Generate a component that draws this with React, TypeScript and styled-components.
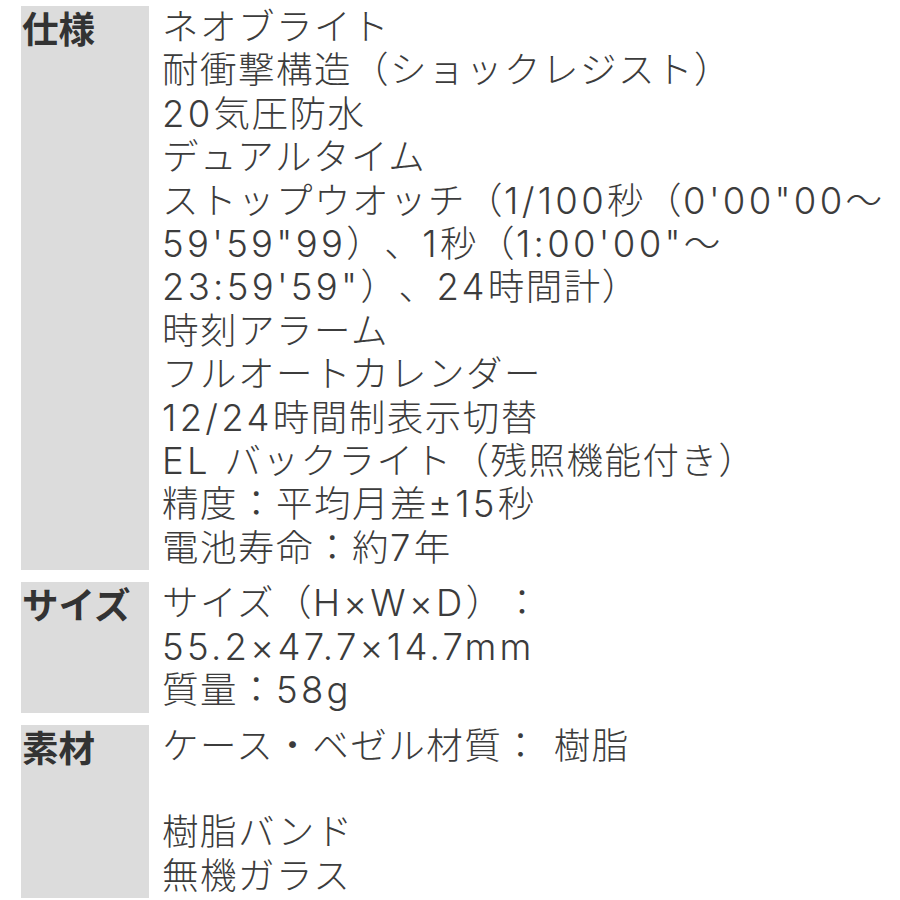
import React from "react";
import styled, { createGlobalStyle } from "styled-components";

const Global = createGlobalStyle`
  html, body { margin: 0; padding: 0; background: #ffffff; }
  body { font-family: "Noto Sans CJK JP", sans-serif; color: #333333; }
`;

const Table = styled.div`
  display: grid;
  grid-template-columns: 128px 1fr;
  column-gap: 13px;
  row-gap: 12px;
  padding: 6px 0 0 21px;
  font-size: 36.5px;
  line-height: 43.4px;
  text-spacing-trim: space-all;
`;

const Label = styled.div`
  background: #dcdcdc;
  font-weight: 700;
  padding-left: 1px;
  color: #333333;
  white-space: nowrap;
`;

const Value = styled.div`
  font-family: "Inter", "Noto Sans CJK JP", sans-serif;
  font-weight: 300;
  color: #3c3c3c;
  letter-spacing: 1.5px;
`;

const Line = styled.div`
  white-space: nowrap;
  min-height: 43.4px;
`;

const Latin = styled.span`
  letter-spacing: 3.3px;
`;

type Row = { label: string; lines: string[] };

const rows: Row[] = [
  {
    label: "仕様",
    lines: [
      "ネオブライト",
      "耐衝撃構造（ショックレジスト）",
      "20気圧防水",
      "デュアルタイム",
      "ストップウオッチ（1/100秒（0'00\"00～",
      "59'59\"99）、1秒（1:00'00\"～",
      "23:59'59\"）、24時間計）",
      "時刻アラーム",
      "フルオートカレンダー",
      "12/24時間制表示切替",
      "EL バックライト（残照機能付き）",
      "精度：平均月差±15秒",
      "電池寿命：約7年",
    ],
  },
  {
    label: "サイズ",
    lines: ["サイズ（H×W×D）：", "55.2×47.7×14.7mm", "質量：58g"],
  },
  {
    label: "素材",
    lines: ["ケース・ベゼル材質： 樹脂", "", "樹脂バンド", "無機ガラス"],
  },
];

function renderRuns(text: string) {
  const parts = text.split(/([\x20-\x7E×±]+)/);
  return parts.map((p, i) =>
    i % 2 === 1 ? <Latin key={i}>{p}</Latin> : <React.Fragment key={i}>{p}</React.Fragment>
  );
}

export default function App() {
  return (
    <>
      <Global />
      <Table>
        {rows.map((r) => (
          <React.Fragment key={r.label}>
            <Label>{r.label}</Label>
            <Value>
              {r.lines.map((l, i) => (
                <Line key={i}>{renderRuns(l)}</Line>
              ))}
            </Value>
          </React.Fragment>
        ))}
      </Table>
    </>
  );
}
